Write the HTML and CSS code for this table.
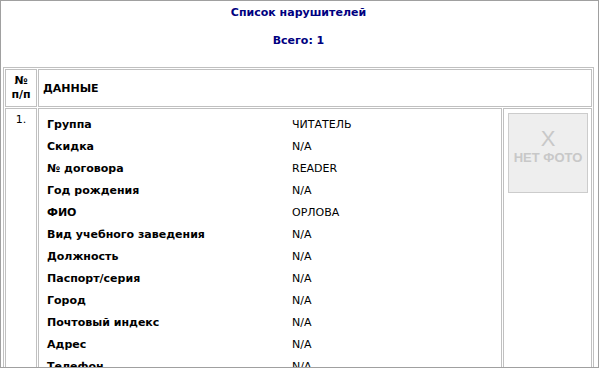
FILE: index.html
```html
<!DOCTYPE html>
<html lang="ru">
<head>
<meta charset="utf-8">
<title>Список нарушителей</title>
<link rel="stylesheet" href="styles.css">
</head>
<body>
<div class="frame">
  <div class="title">Список нарушителей</div>
  <div class="total">Всего: 1</div>
  <table class="report">
    <tr>
      <th class="num">№<br>п/п</th>
      <th class="head" colspan="2">ДАННЫЕ</th>
    </tr>
    <tr>
      <td class="num idx">1.</td>
      <td class="data">
        <table class="fields">
          <tr><td class="label">Группа</td><td class="value">ЧИТАТЕЛЬ</td></tr>
          <tr><td class="label">Скидка</td><td class="value">N/A</td></tr>
          <tr><td class="label">№ договора</td><td class="value">READER</td></tr>
          <tr><td class="label">Год рождения</td><td class="value">N/A</td></tr>
          <tr><td class="label">ФИО</td><td class="value">ОРЛОВА</td></tr>
          <tr><td class="label">Вид учебного заведения</td><td class="value">N/A</td></tr>
          <tr><td class="label">Должность</td><td class="value">N/A</td></tr>
          <tr><td class="label">Паспорт/серия</td><td class="value">N/A</td></tr>
          <tr><td class="label">Город</td><td class="value">N/A</td></tr>
          <tr><td class="label">Почтовый индекс</td><td class="value">N/A</td></tr>
          <tr><td class="label">Адрес</td><td class="value">N/A</td></tr>
          <tr><td class="label">Телефон</td><td class="value">N/A</td></tr>
          <tr><td class="label">E-mail</td><td class="value">N/A</td></tr>
          <tr><td class="label">Примечание</td><td class="value">N/A</td></tr>
        </table>
      </td>
      <td class="photo">
        <div class="nophoto">
          <span class="x">X</span>
          <span class="np">НЕТ ФОТО</span>
        </div>
      </td>
    </tr>
  </table>
</div>
</body>
</html>
```
FILE: styles.css
```css
html, body {
  margin: 0;
  padding: 0;
  background: #ffffff;
}
.frame {
  width: 599px;
  height: 368px;
  box-sizing: border-box;
  border: 1px solid #a0a0a0;
  padding: 5px 4px 0 2px;
  overflow: hidden;
  font-family: "DejaVu Sans", Verdana, sans-serif;
  font-size: 11px;
  line-height: 14px;
  color: #000000;
}
.title, .total {
  text-align: center;
  color: #000080;
  font-weight: bold;
}
.total {
  margin-top: 14px;
}
.report {
  margin-top: 19px;
  width: 591px;
  border: 1px solid #c0c0c0;
  border-collapse: separate;
  border-spacing: 1px;
}
.report > tbody > tr > th,
.report > tbody > tr > td {
  border: 1px solid #c0c0c0;
  padding: 4px;
  font-size: 11px;
  line-height: 14px;
}
.report th {
  font-weight: bold;
}
.report > tbody > tr > th.head {
  padding: 5px 4px 3px 4px;
}
.num {
  width: 22px;
  text-align: center;
  vertical-align: top;
}
th.num {
  vertical-align: middle;
}
.head {
  text-align: left;
  vertical-align: middle;
}
.idx {
  font-weight: normal;
}
.data {
  vertical-align: top;
}
.report > tbody > tr > td.photo {
  width: 80px;
  padding: 4px 3px 4px 4px;
  vertical-align: top;
}
.fields {
  width: 100%;
  border-collapse: collapse;
}
.fields td {
  padding: 5px 4px 3px 4px;
  line-height: 14px;
  vertical-align: top;
}
.label {
  width: 237px;
  font-weight: bold;
}
.value {
  font-weight: normal;
}
.nophoto {
  width: 78px;
  background: #eeeeee;
  border: 1px solid #cccccc;
  display: flex;
  flex-direction: column;
  align-items: center;
  padding-top: 14px;
  box-sizing: content-box;
  height: 64px;
  font-family: "Liberation Sans", Arial, sans-serif;
  color: #c8c8c8;
}
.x {
  font-size: 22px;
  line-height: 22px;
}
.np {
  font-size: 13px;
  font-weight: bold;
  line-height: 16px;
}
```
